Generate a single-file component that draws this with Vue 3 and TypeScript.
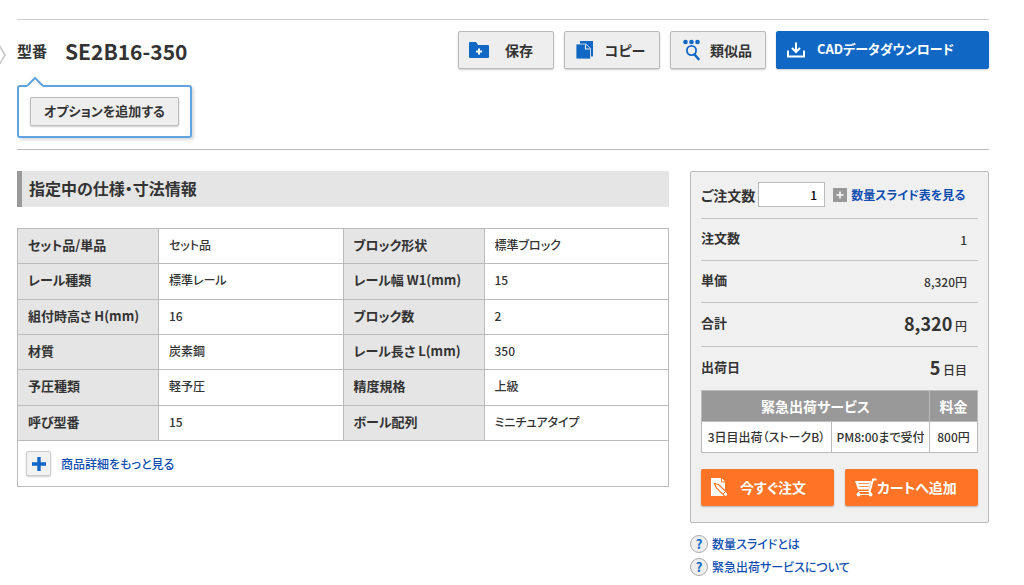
<script setup lang="ts">
import { ref } from 'vue'

interface Spec {
  label: string
  value: string
}

const specRows: [Spec, Spec][] = [
  [{ label: 'セット品/単品', value: 'セット品' }, { label: 'ブロック形状', value: '標準ブロック' }],
  [{ label: 'レール種類', value: '標準レール' }, { label: 'レール幅 W1(mm)', value: '15' }],
  [{ label: '組付時高さ H(mm)', value: '16' }, { label: 'ブロック数', value: '2' }],
  [{ label: '材質', value: '炭素鋼' }, { label: 'レール長さ L(mm)', value: '350' }],
  [{ label: '予圧種類', value: '軽予圧' }, { label: '精度規格', value: '上級' }],
  [{ label: '呼び型番', value: '15' }, { label: 'ボール配列', value: 'ミニチュアタイプ' }],
]

const helpLinks: string[] = ['数量スライドとは', '緊急出荷サービスについて']
const quantity = ref('1')
</script>

<template>
  <main class="page">
    <svg class="prev" width="7" height="22" viewBox="0 0 7 22" aria-hidden="true">
      <path d="M-1 1 L5 11 L-1 21" fill="none" stroke="#c4c4c4" stroke-width="1.5" />
    </svg>

    <header class="head">
      <div class="bar">
        <h1 class="model"><span class="model-label">型番</span><span class="model-code">SE2B16-350</span></h1>
        <div class="actions">
          <button type="button" class="btn grey">
            <svg width="20" height="18" viewBox="0 0 20 18" aria-hidden="true">
              <path d="M0 2 Q0 1 1 1 H7 L9 4 H19 Q20 4 20 5 V16 Q20 17 19 17 H1 Q0 17 0 16Z" fill="#1068c4" />
              <path d="M10 7.5 V13.5 M7 10.5 H13" stroke="#fff" stroke-width="2" />
            </svg>
            <span>保存</span>
          </button>
          <button type="button" class="btn grey">
            <svg width="20" height="20" viewBox="0 0 20 20" aria-hidden="true">
              <path d="M5 1 H18 V16.5 H5Z" fill="#1068c4" />
              <path d="M1 4 H11 L15.500 8.500 V19 H1Z" fill="#1068c4" stroke="#eee" stroke-width="0.8" />
              <path d="M10.500 4.500 V9 H15" fill="none" stroke="#eee" stroke-width="1.2" />
            </svg>
            <span>コピー</span>
          </button>
          <button type="button" class="btn grey">
            <svg width="20" height="22" viewBox="0 0 20 22" aria-hidden="true">
              <g fill="#1068c4">
                <circle cx="4.500" cy="3" r="2.300" />
                <circle cx="10.500" cy="3" r="2.300" />
                <circle cx="16.500" cy="3" r="2.300" />
              </g>
              <circle cx="10.500" cy="11.500" r="4.600" fill="none" stroke="#1068c4" stroke-width="1.800" />
              <path d="M13.500 15.500 L17.500 20" stroke="#1068c4" stroke-width="2.600" stroke-linecap="round" />
            </svg>
            <span>類似品</span>
          </button>
          <button type="button" class="btn blue">
            <svg width="18" height="16" viewBox="0 0 18 16" aria-hidden="true">
              <path d="M1 8.500 V14.500 H17 V8.500" fill="none" stroke="#fff" stroke-width="2" />
              <path d="M9 0.500 V9.500 M5 6 L9 10 L13 6" fill="none" stroke="#fff" stroke-width="2" />
            </svg>
            <span>CADデータダウンロード</span>
          </button>
        </div>
      </div>
      <div class="option">
        <svg class="option-tip" width="16" height="11" viewBox="0 0 16 11" aria-hidden="true">
          <path d="M0 11 V10 L8 2 L16 10 V11Z" fill="#fff" />
          <path d="M0 10 L8 2 L16 10" fill="none" stroke="#62a4df" stroke-width="2" />
        </svg>
        <button type="button" class="option-btn">オプションを追加する</button>
      </div>
    </header>

    <div class="columns">
      <section class="specs">
        <h2 class="title">指定中の仕様・寸法情報</h2>
        <table class="spec-table">
          <colgroup><col class="c-label" /><col /><col class="c-label" /><col /></colgroup>
          <tbody>
            <tr v-for="(row, i) in specRows" :key="i">
              <template v-for="s in row" :key="s.label">
                <th scope="row">{{ s.label }}</th>
                <td>{{ s.value }}</td>
              </template>
            </tr>
          </tbody>
        </table>
        <div class="more">
          <a href="#detail">
            <span class="more-icon">
              <svg width="16" height="16" viewBox="0 0 16 16" aria-hidden="true">
                <path d="M8 1 V15 M1 8 H15" stroke="#1068c4" stroke-width="3.400" />
              </svg>
            </span>
            商品詳細をもっと見る
          </a>
        </div>
      </section>

      <aside class="side">
        <div class="panel">
          <div class="qty">
            <label for="qty">ご注文数</label>
            <input id="qty" v-model="quantity" type="text" inputmode="numeric" />
            <a href="#slide">
              <svg width="14" height="14" viewBox="0 0 14 14" aria-hidden="true">
                <rect width="14" height="14" fill="#999" />
                <path d="M7 3.500 V10.500 M3.500 7 H10.500" stroke="#fff" stroke-width="1.500" />
              </svg>
              数量スライド表を見る
            </a>
          </div>
          <dl class="summary">
            <div><dt>注文数</dt><dd>1</dd></div>
            <div><dt>単価</dt><dd>8,320円</dd></div>
            <div><dt>合計</dt><dd><strong>8,320</strong> 円</dd></div>
            <div><dt>出荷日</dt><dd><strong>5</strong> 日目</dd></div>
          </dl>
          <table class="express">
            <colgroup><col /><col class="c-limit" /><col class="c-fee" /></colgroup>
            <thead>
              <tr><th scope="col" colspan="2">緊急出荷サービス</th><th scope="col">料金</th></tr>
            </thead>
            <tbody>
              <tr><td>3日目出荷（ストークB）</td><td>PM8:00まで受付</td><td>800円</td></tr>
            </tbody>
          </table>
          <div class="buy">
            <button type="button" class="order">
              <svg width="18" height="20" viewBox="0 0 18 20" aria-hidden="true">
                <path d="M0 0 H10.500 L14 3.500 V18 H0Z" fill="#fff" />
                <path d="M10.500 0 V4 H14" fill="none" stroke="#ff7426" />
                <path d="M3.500 5.500 L7.500 6.500 L16.500 15 Q17.500 18.500 14 18.500 L5 9.500Z" fill="#fff" stroke="#ff7426" stroke-width="1.200" />
                <path d="M12 16 L14.500 13.500" stroke="#ff7426" />
              </svg>
              <span>今すぐ注文</span>
            </button>
            <button type="button" class="cart">
              <svg width="22" height="19" viewBox="0 0 22 19" aria-hidden="true">
                <path d="M0 3 H16 L14 11.500 H3Z" fill="#fff" />
                <path d="M3.500 5.500 H14 M4.500 8.500 H13.500" stroke="#ff7426" stroke-width="0.8" />
                <path d="M21.500 1.500 H18 L14.500 13.500 L16 16" fill="none" stroke="#fff" stroke-width="2" />
                <path d="M3 16.500 H16 M4 13.500 H14.500 M4 13.500 L3 16" stroke="#fff" />
                <circle cx="3.500" cy="16.500" r="2" fill="#fff" />
                <circle cx="15.500" cy="16.500" r="2" fill="#fff" />
              </svg>
              <span>カートへ追加</span>
            </button>
          </div>
        </div>
        <ul class="help">
          <li v-for="text in helpLinks" :key="text">
            <a href="#help"><span class="q" aria-hidden="true">?</span>{{ text }}</a>
          </li>
        </ul>
      </aside>
    </div>
  </main>
</template>

<style>
body {
  margin: 0;
  background: #fff;
}
</style>

<style scoped>
* {
  box-sizing: border-box;
}
.page {
  position: relative;
  padding: 19px 35px 0 17px;
  color: #333;
  font: 500 12px/18px "Noto Sans CJK JP", sans-serif;
  font-feature-settings: "palt";
}
svg {
  display: block;
  flex: none;
}
button,
input {
  font: inherit;
  font-feature-settings: inherit;
  color: inherit;
}
button {
  cursor: pointer;
}
a {
  color: #0f4eb0;
  font-weight: 500;
  text-decoration: none;
}
.prev {
  position: absolute;
  left: 0;
  top: 44px;
}
.head {
  border-top: 1px solid #ccc;
  border-bottom: 1px solid #bbb;
  padding: 11px 0;
}
.bar {
  display: flex;
  justify-content: space-between;
  align-items: flex-start;
}
.model {
  display: flex;
  align-items: center;
  gap: 18px;
  margin: 0;
  line-height: 40px;
}
.model-label {
  font-size: 15px;
}
.model-code {
  font-size: 21px;
}
.actions {
  display: flex;
  gap: 10px;
}
.btn {
  display: flex;
  align-items: center;
  width: 96px;
  height: 38px;
  padding: 0 10px;
  border: 1px solid #bbb;
  border-radius: 2px;
  background: #eee;
  box-shadow: 0 1px 2px rgba(0, 0, 0, 0.2);
  font-size: 14px;
  font-weight: 700;
}
.btn span {
  flex: 1;
  padding-left: 6px;
  text-align: center;
}
.btn.blue {
  width: 213px;
  border-color: #1068c4;
  background: #1068c4;
  color: #fff;
  font-size: 13px;
}
.btn.blue span {
  flex: none;
  padding: 0 0 2px 12px;
}
.option {
  position: relative;
  width: 175px;
  margin-top: 14px;
  padding: 10px 11px;
  border: 2px solid #62a4df;
  border-radius: 3px;
  box-shadow: 2px 2px 3px rgba(0, 0, 0, 0.15);
}
.option-tip {
  position: absolute;
  left: 8px;
  top: -11px;
}
.option-btn {
  display: block;
  width: 100%;
  height: 29px;
  padding: 0 0 2px;
  border: 1px solid #bbb;
  border-radius: 2px;
  background: #eee;
  box-shadow: 0 1px 2px rgba(0, 0, 0, 0.2);
  font-size: 13px;
  font-weight: 700;
}
.columns {
  display: flex;
  align-items: flex-start;
  gap: 21px;
  margin-top: 21px;
}
.specs {
  flex: 1;
}
.title {
  margin: 0 0 21px;
  padding: 0 7px 2px;
  border-left: 5px solid #999;
  background: #e5e5e5;
  font-size: 16px;
  line-height: 34px;
}
.spec-table {
  width: 100%;
  height: 213px;
  border-collapse: collapse;
  table-layout: fixed;
}
.c-label {
  width: 141px;
}
.spec-table th,
.spec-table td {
  padding: 0 10px 2px;
  border: 1px solid #bbb;
  text-align: left;
}
.spec-table th {
  background: #e5e5e5;
  font-size: 13px;
}
.more {
  padding: 10px 8px;
  border: 1px solid #bbb;
  border-top: 0;
}
.more a {
  display: flex;
  align-items: center;
  gap: 10px;
}
.more-icon {
  display: grid;
  place-items: center;
  width: 25px;
  height: 25px;
  border: 1px solid #ccc;
  border-radius: 2px;
  background: #f2f2f2;
  box-shadow: 0 1px 2px rgba(0, 0, 0, 0.2);
}
.side {
  width: 299px;
}
.panel {
  padding: 10px 10px 16px;
  border: 1px solid #bbb;
  border-radius: 2px;
  background: #f0f0f0;
}
.qty {
  display: flex;
  align-items: center;
  padding-bottom: 11px;
}
.qty label {
  font-size: 14px;
  font-weight: 700;
}
.qty input {
  width: 67px;
  height: 25px;
  margin: 0 8px 0 3px;
  padding: 0 7px;
  border: 1px solid #bbb;
  background: #fff;
  color: #000;
  text-align: right;
}
.qty a {
  display: flex;
  align-items: center;
  gap: 4px;
  font-weight: 700;
}
.summary {
  margin: 0;
}
.summary div {
  display: flex;
  justify-content: space-between;
  align-items: center;
  height: 42px;
  padding-right: 11px;
  border-top: 1px solid #c4c4c4;
}
.summary div:nth-child(n + 3) {
  height: 44px;
}
.summary dt {
  padding-bottom: 4px;
  font-size: 13px;
  font-weight: 700;
}
.summary dd {
  margin: 0;
}
.summary strong {
  font-size: 18px;
}
.express {
  width: 100%;
  border-collapse: collapse;
  table-layout: fixed;
  white-space: nowrap;
}
.c-limit {
  width: 98px;
}
.c-fee {
  width: 48px;
}
.express th,
.express td {
  height: 31px;
  padding: 0;
  border: 1px solid #bbb;
  text-align: center;
}
.express th {
  background: #999;
  color: #fff;
  font-size: 14px;
}
.express td {
  background: #fff;
}
.buy {
  display: grid;
  grid-template-columns: 1fr 1fr;
  gap: 11px;
  margin-top: 16px;
}
.buy button {
  display: flex;
  align-items: center;
  height: 37px;
  padding: 0 10px;
  border: 0;
  border-radius: 2px;
  background: #ff7426;
  box-shadow: 0 1px 2px rgba(0, 0, 0, 0.25);
  color: #fff;
  font-size: 14px;
  font-weight: 700;
}
.buy span {
  padding-bottom: 2px;
}
.buy .order {
  gap: 11px;
}
.help {
  margin: 9px 0 0;
  padding: 0;
  list-style: none;
}
.help a {
  display: flex;
  align-items: center;
  gap: 4px;
  height: 23px;
}
.q {
  display: grid;
  place-items: center;
  width: 18px;
  height: 18px;
  border: 1px solid #aaa;
  border-radius: 50%;
  background: #eee;
  color: #1068c4;
  font-size: 13px;
  font-weight: 700;
  line-height: 16px;
}
</style>
